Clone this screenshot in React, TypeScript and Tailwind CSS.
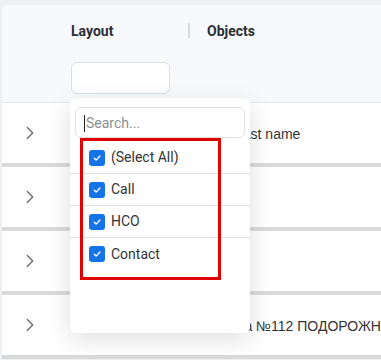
import { ChevronRight } from 'lucide-react';

const rows = [
  'Call Last name',
  '',
  '',
  'Аптека №112 ПОДОРОЖНИК',
];

const options = ['(Select All)', 'Call', 'HCO', 'Contact'];

function CheckBox() {
  return (
    <span className="flex h-[16px] w-[16px] items-center justify-center rounded-[3px] bg-[#1473e6]">
      <svg width="10" height="10" viewBox="0 0 10 10" fill="none">
        <path d="M2.2 5.2 4.2 7.1 7.9 3" stroke="white" strokeWidth="1.4" strokeLinecap="round" strokeLinejoin="round" />
      </svg>
    </span>
  );
}

export default function App() {
  return (
    <div className="relative h-[360px] w-[381px] overflow-hidden bg-[#eef1f4] pl-[2px] pt-[5px] font-['Roboto',sans-serif]">
      <div className="rounded-tl-md bg-white">
        {/* Header */}
        <div className="flex h-[98px] rounded-tl-md border-b border-[#e3e6ea] bg-[#f8f9fa] pt-[17px]">
          <div className="w-[69px] shrink-0" />
          <div className="w-[117px] shrink-0">
            <div className="h-[18px] text-[14px] font-bold leading-[18px] text-[#2b2f36]">Layout</div>
            <div className="mt-[22px] h-[32px] w-[99px] rounded-md border border-[#dcdfe3] bg-white" />
          </div>
          <div className="mt-[1px] h-[15px] w-[2px] shrink-0 bg-[#d6dadf]" />
          <div className="pl-[17px] text-[14px] font-bold leading-[18px] text-[#2b2f36]">Objects</div>
        </div>

        {/* Rows */}
        {rows.map((text, i) => (
          <div key={i} className="flex h-[64px] items-center border-b-4 border-[#dadada]">
            <div className="w-[69px] shrink-0 pl-[17px] text-[#6b6f75]">
              <ChevronRight size={22} strokeWidth={1.5} />
            </div>
            <div className="w-[136px] shrink-0" />
            <div className="whitespace-nowrap pt-[2px] font-['Liberation_Sans',sans-serif] text-[14px] text-[#333]">{text}</div>
          </div>
        ))}
      </div>

      {/* Filter dropdown */}
      <div className="absolute left-[70px] top-[98px] h-[235px] w-[180px] rounded-md bg-white shadow-[0_6px_24px_rgba(0,0,0,0.13)]">
        <div className="ml-[5px] mt-[9px] flex h-[31px] w-[170px] items-center rounded-md border border-[#dcdfe3] pl-[8px] pt-[1px]">
          <span className="h-[17px] w-px bg-[#222]" />
          <span className="ml-px text-[14px] text-[#8a8f96]">Search...</span>
        </div>
        <div className="mt-[4px]">
          {options.map((o, i) => (
            <div
              key={o}
              className={`flex h-[32px] items-center gap-[6px] pl-[19px] text-[14px] text-[#333] ${i < options.length - 1 ? 'border-b border-[#e2e2e2]' : ''}`}
            >
              <CheckBox />
              <span>{o}</span>
            </div>
          ))}
        </div>
      </div>

      {/* Highlight annotation */}
      <div className="absolute left-[80px] top-[138px] h-[142px] w-[141px] border-[3px] border-[#e00000]" />
    </div>
  );
}
